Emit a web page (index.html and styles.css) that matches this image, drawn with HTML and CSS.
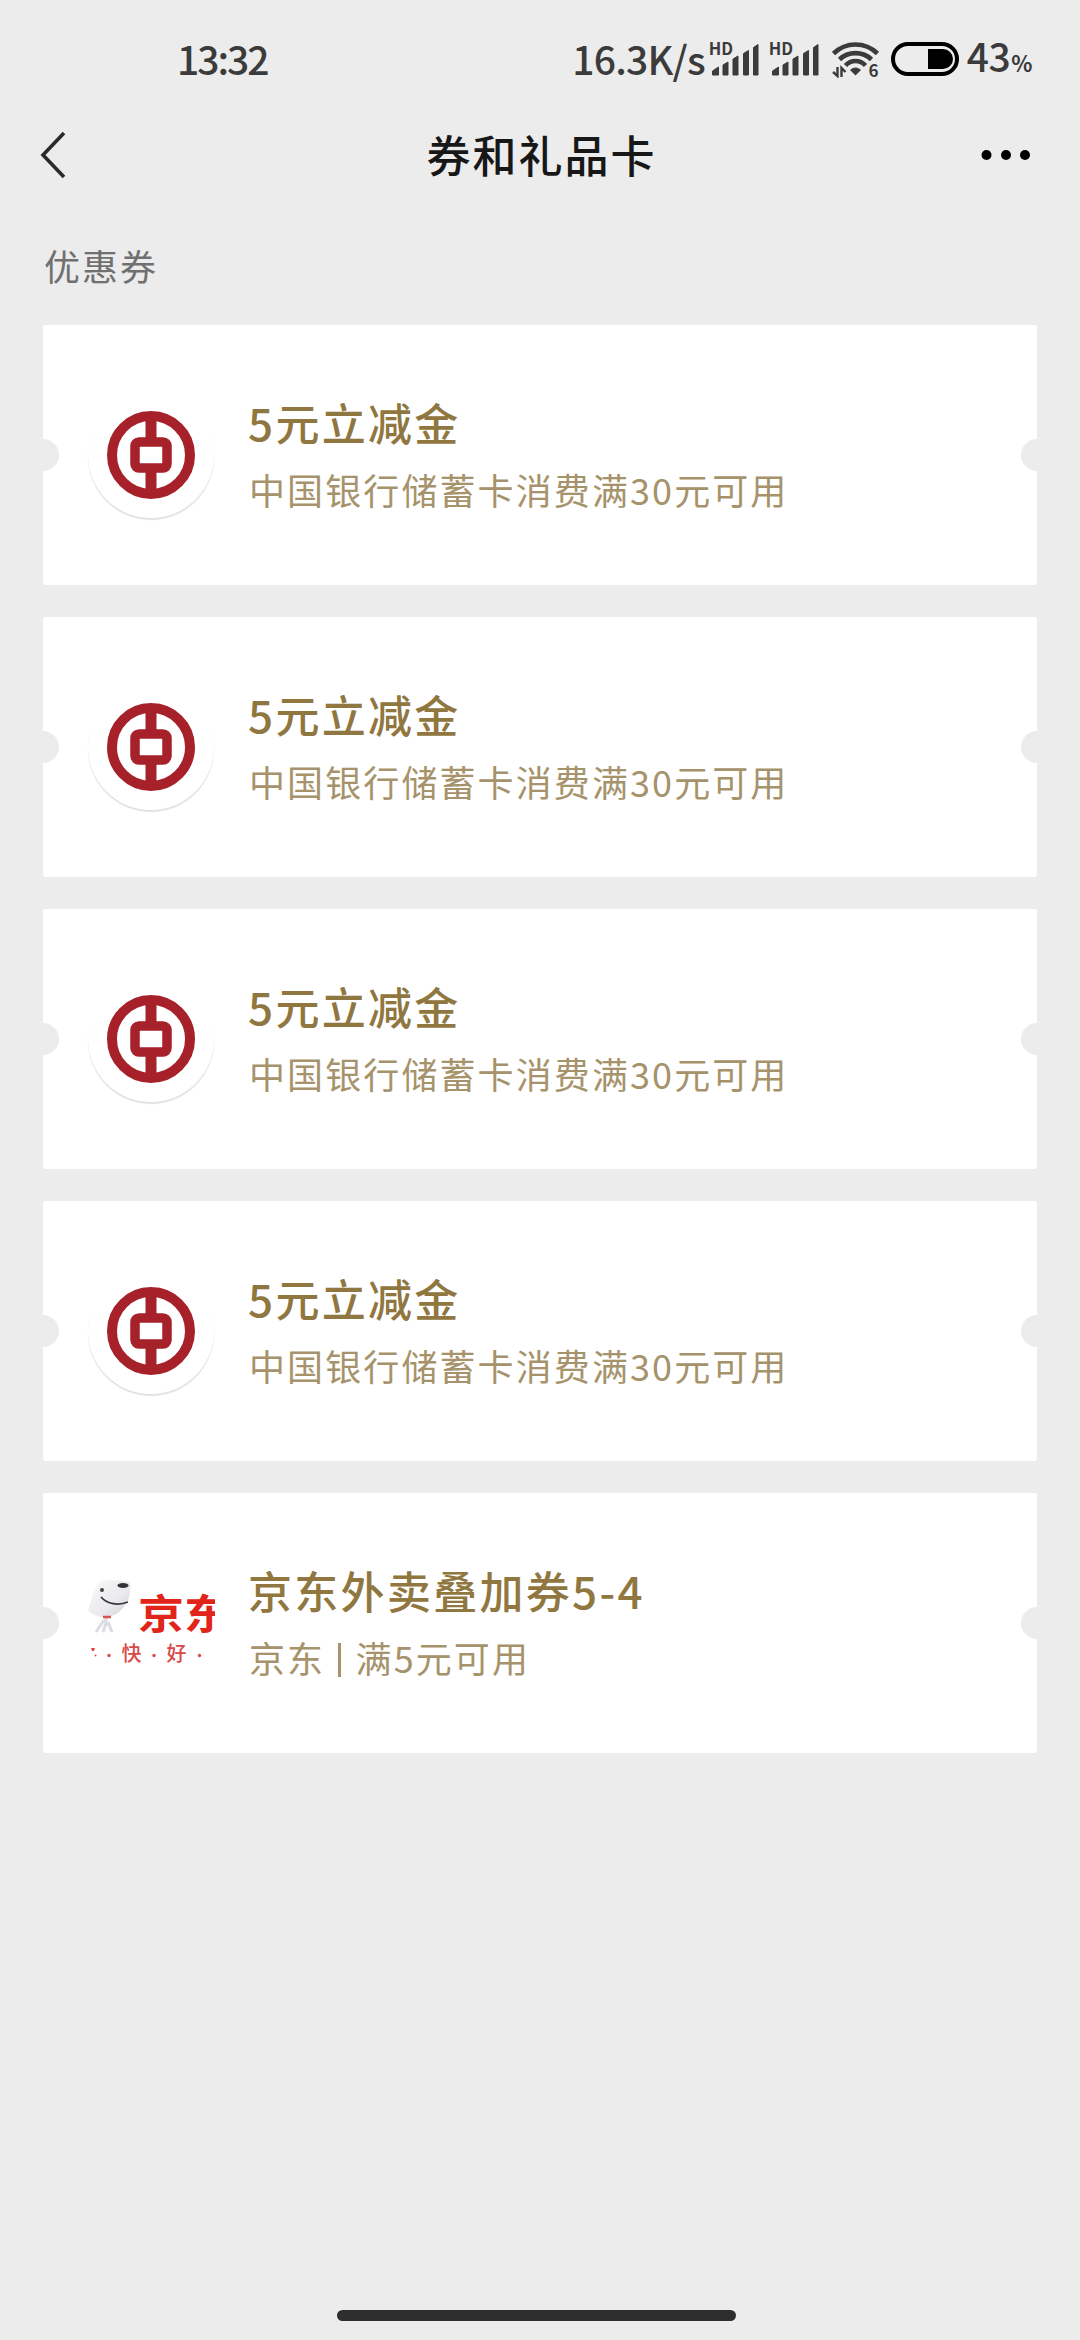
FILE: index.html
```html
<!DOCTYPE html>
<html lang="zh-CN">
<head>
    <meta charset="UTF-8">
    <meta name="viewport" content="width=device-width, initial-scale=1.0">
    <title>券和礼品卡</title>
    <link rel="stylesheet" href="styles.css">
</head>
<body>
    <!-- shared icons -->
    <svg class="defs" width="0" height="0">
        <symbol id="boc" viewBox="0 0 88 88">
            <circle cx="44" cy="44" r="39" fill="#fff" stroke="#a6212a" stroke-width="10"/>
            <path d="M44 8v22M44 58v22" stroke="#a6212a" stroke-width="11"/>
            <rect x="28" y="31" width="32" height="26" rx="4" fill="#fff" stroke="#a6212a" stroke-width="9.500"/>
        </symbol>
        <symbol id="bars" viewBox="0 0 50 36">
            <path d="M3.500 30l6-4v8h-6zM14 24l5-3v13h-5zM24 18l5-3v19h-5zM34.500 12.500l5-3v24.500h-5zM44.500 6.500l4.500-3v30.500h-4.500z" fill="#3b3b3b" stroke="#3b3b3b" stroke-width="1" stroke-linejoin="round"/>
        </symbol>
    </svg>

    <div class="status-bar">
        <span class="time">13:32</span>
        <div class="status-right">
            <span class="speed">16.3K/s</span>
            <div class="signal">
                <span class="hd">HD</span>
                <svg width="50" height="36"><use href="#bars"/></svg>
            </div>
            <div class="signal">
                <span class="hd">HD</span>
                <svg width="50" height="36"><use href="#bars"/></svg>
            </div>
            <svg class="wifi" width="48" height="38" viewBox="0 0 48 38">
                <g fill="none" stroke="#3b3b3b" stroke-width="4.600">
                    <path d="M1.500 13.500C14 1.500 33 1.500 45.500 13.500"/>
                    <path d="M7.500 19.500C16 11 31 11 39.500 19.500"/>
                    <path d="M13.500 25.500C19 19.500 28 19.500 33.500 25.500"/>
                </g>
                <path d="M18 30c3-3.500 8-3.500 11 0l-5.500 5.500z" fill="#3b3b3b"/>
                <path d="M5.500 27v9L1 32M9.500 37v-9l4 4" fill="none" stroke="#3b3b3b" stroke-width="2.400"/>
                <text x="36.500" y="36.500" class="wifi-gen">6</text>
            </svg>
            <svg class="battery" width="68" height="34" viewBox="0 0 68 34">
                <rect x="2" y="2" width="64" height="30" rx="15" fill="none" stroke="#000" stroke-width="4"/>
                <path d="M37 7h15a10 10 0 0 1 0 20h-15z" fill="#000"/>
            </svg>
            <span class="level">43<small>%</small></span>
        </div>
    </div>

    <div class="nav-bar">
        <svg width="30" height="50" viewBox="0 0 30 50">
            <path d="M25 3L4 25l21 22" fill="none" stroke="#2b2b2b" stroke-width="3.600"/>
        </svg>
        <h1>券和礼品卡</h1>
        <svg width="50" height="12" viewBox="0 0 50 12">
            <circle cx="5.500" cy="6" r="5"/>
            <circle cx="25" cy="6" r="5"/>
            <circle cx="44" cy="6" r="5"/>
        </svg>
    </div>

    <div class="section-title">优惠券</div>

    <div class="coupons">
        <div class="coupon">
            <div class="logo round"><svg width="88" height="88"><use href="#boc"/></svg></div>
            <div class="info">
                <div class="name">5元立减金</div>
                <div class="desc">中国银行储蓄卡消费满30元可用</div>
            </div>
        </div>
        <div class="coupon">
            <div class="logo round"><svg width="88" height="88"><use href="#boc"/></svg></div>
            <div class="info">
                <div class="name">5元立减金</div>
                <div class="desc">中国银行储蓄卡消费满30元可用</div>
            </div>
        </div>
        <div class="coupon">
            <div class="logo round"><svg width="88" height="88"><use href="#boc"/></svg></div>
            <div class="info">
                <div class="name">5元立减金</div>
                <div class="desc">中国银行储蓄卡消费满30元可用</div>
            </div>
        </div>
        <div class="coupon">
            <div class="logo round"><svg width="88" height="88"><use href="#boc"/></svg></div>
            <div class="info">
                <div class="name">5元立减金</div>
                <div class="desc">中国银行储蓄卡消费满30元可用</div>
            </div>
        </div>
        <div class="coupon">
            <div class="logo">
                <svg width="127" height="127" viewBox="0 0 127 127">
                    <defs>
                        <linearGradient id="dog" x1="0" y1="0" x2="1" y2="1">
                            <stop offset="0" stop-color="#fafafa"/>
                            <stop offset="0.600" stop-color="#eaeaed"/>
                            <stop offset="1" stop-color="#cfcfd4"/>
                        </linearGradient>
                    </defs>
                    <g transform="translate(0 3)">
                        <path d="M0 48C3 38 6 25 11 19c8-3 19-2 30 0 2 2 2 4 1 8 0 9-4 16-11 22-5 4-12 6-18 5-5-1-9-3-13-6z" fill="url(#dog)"/>
                        <ellipse cx="35" cy="22.500" rx="5.500" ry="2.500" fill="#333338"/>
                        <circle cx="14" cy="27" r="2" fill="#444"/>
                        <path d="M13 34c6 7 17 9 27 5" fill="none" stroke="#3a3a3e" stroke-width="1.800"/>
                        <path d="M18 54v9M16 57l-8 12M18 60l-3 9M20 59l4 10" fill="none" stroke="#dcdce0" stroke-width="3"/>
                        <path d="M15 54h8" stroke="#d9544f" stroke-width="2.500"/>
                    </g>
                    <text transform="translate(50 69) scale(1 0.880)" class="jd-name">京东</text>
                    <text x="33.500" y="101" class="jd-slogan">快</text>
                    <text x="78.500" y="101" class="jd-slogan">好</text>
                    <g fill="#d94a46">
                        <path d="M3 88h4l-1 3h-2z"/>
                        <circle cx="7.500" cy="95.500" r="1"/>
                        <circle cx="21" cy="95.500" r="1.700"/>
                        <circle cx="66" cy="95.500" r="1.700"/>
                        <circle cx="111.500" cy="95.500" r="1.700"/>
                    </g>
                </svg>
            </div>
            <div class="info">
                <div class="name">京东外卖叠加券5-4</div>
                <div class="desc">京东 <i class="divider"></i> 满5元可用</div>
            </div>
        </div>
    </div>

    <div class="home-bar"></div>
</body>
</html>
```
FILE: styles.css
```css
* {
    box-sizing: border-box;
}
body {
    margin: 0;
    height: 2340px;
    display: flex;
    flex-direction: column;
    background-color: #ececec;
    font-family: "Noto Sans CJK SC", "Noto Sans", sans-serif;
    overflow: hidden;
}
svg {
    display: block;
    flex: none;
}
.defs {
    position: absolute;
}
.status-bar {
    height: 118px;
    padding: 0 48px 0 177px;
    display: flex;
    align-items: center;
    justify-content: space-between;
    color: #3b3b3b;
    font-size: 39px;
    font-weight: 500;
    line-height: 56px;
}
.time {
    margin-top: -3px;
    letter-spacing: -2px;
}
.status-right {
    display: flex;
    align-items: center;
}
.speed {
    margin: -3px 4px 0 0;
    letter-spacing: -0.8px;
}
.signal {
    position: relative;
    margin-right: 10px;
}
.hd {
    position: absolute;
    left: 0;
    top: -3px;
    font-size: 16.5px;
    font-weight: 700;
    line-height: 20px;
}
.wifi {
    margin-left: 3px;
}
.wifi-gen {
    font-size: 17px;
    font-weight: 700;
    fill: #3b3b3b;
}
.battery {
    margin: 0 8px 0 11px;
}
.level {
    margin-top: -1px;
    letter-spacing: -0.5px;
}
.level small {
    margin-left: 1px;
    font-size: 22px;
    font-weight: 700;
}
.nav-bar {
    height: 74px;
    padding: 0 49px 0 39px;
    display: flex;
    align-items: center;
    justify-content: space-between;
}
.nav-bar h1 {
    margin: -2px 0 0 33px;
    color: #171717;
    font-size: 44px;
    font-weight: 500;
    line-height: 64px;
    letter-spacing: 2px;
}
.section-title {
    margin: 47px 0 0 44px;
    height: 86px;
    color: #707070;
    font-size: 36px;
    line-height: 52px;
    letter-spacing: 2px;
}
.coupons {
    padding: 0 43px;
    display: flex;
    flex-direction: column;
    gap: 32px;
}
.coupon {
    position: relative;
    height: 260px;
    padding-left: 45px;
    display: flex;
    align-items: center;
    gap: 34px;
    background-color: #fff;
    border-radius: 3px;
}
/* ticket notches */
.coupon::before,
.coupon::after {
    content: "";
    position: absolute;
    top: 114px;
    width: 16px;
    height: 32px;
    background-color: #ececec;
}
.coupon::before {
    left: 0;
    border-radius: 0 16px 16px 0;
}
.coupon::after {
    right: 0;
    border-radius: 16px 0 0 16px;
}
.logo {
    width: 126px;
    height: 126px;
    flex: none;
    display: flex;
    align-items: center;
    justify-content: center;
}
.round {
    border-radius: 50%;
    background-color: #fff;
    box-shadow: 0 2px 1px #e2e2e2;
}
.jd-name {
    font-size: 46px;
    font-weight: 700;
    fill: #e1251b;
}
.jd-slogan {
    font-size: 20px;
    font-weight: 500;
    fill: #d94a46;
}
.name {
    color: #90773f;
    font-size: 44px;
    font-weight: 500;
    line-height: 64px;
    letter-spacing: 2.3px;
}
.desc {
    margin: 5px 0 1px 1px;
    color: #a6936b;
    font-size: 36px;
    line-height: 60px;
    letter-spacing: 2.1px;
}
.divider {
    display: inline-block;
    width: 3px;
    height: 34px;
    margin: 0 4px 0 3px;
    vertical-align: -4px;
    background-color: #a6936b;
}
.home-bar {
    width: 399px;
    height: 11px;
    margin: auto 0 19px 337px;
    border-radius: 6px;
    background-color: #2e2e2e;
}
```
